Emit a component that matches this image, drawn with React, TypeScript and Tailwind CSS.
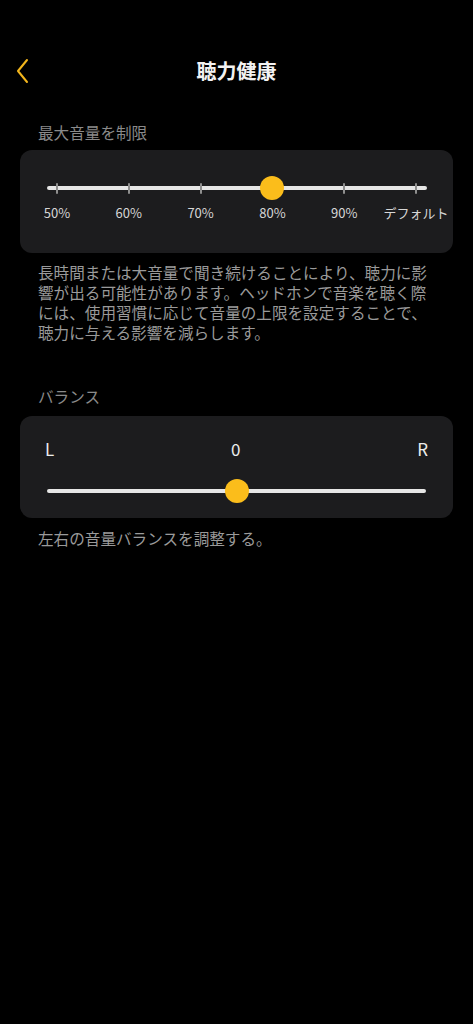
import React from "react";

const FONT = { fontFamily: '"Noto Sans CJK JP", "Noto Sans", Roboto, sans-serif' };

function Knob({ className }: { className: string }) {
  return <div className={`absolute top-1/2 -translate-y-1/2 -translate-x-1/2 w-[24px] h-[24px] rounded-full bg-[#fbbd1b] ${className}`} />;
}

export default function App() {
  const labels = ["50%", "60%", "70%", "80%", "90%", "デフォルト"];
  return (
    <div className="min-h-[1024px] w-full bg-black text-white" style={FONT}>
      {/* Header */}
      <div className="pt-[50px] grid grid-cols-[48px_1fr_48px] items-center h-[92px]">
        <div className="flex items-center pl-[15px]">
          <svg width="16" height="26" viewBox="0 0 16 26" fill="none">
            <path d="M12 2 L3 13 L12 24" stroke="#f2b51c" strokeWidth="2" strokeLinecap="round" strokeLinejoin="round" />
          </svg>
        </div>
        <div className="text-center text-[20px] font-bold leading-[28px] text-[#f2f2f2]">聴力健康</div>
        <div />
      </div>

      {/* Section 1 */}
      <div className="mt-[30px] px-[38px] text-[15.6px] leading-[20px] text-[#8a8a8a]">最大音量を制限</div>
      <div className="mt-[8px] mx-[20px] h-[103px] rounded-[12px] bg-[#1c1c1e] pt-[26px]">
        <div className="relative h-[24px]">
          <div className="absolute left-[27px] right-[26px] top-1/2 -translate-y-1/2 h-[4px] rounded-full bg-[#e6e6e6]" />
          <div className="absolute inset-0 px-[1px] grid grid-cols-6">
            {labels.map((l, i) => (
              <div key={l} className="relative flex items-center justify-center">
                {i !== 3 && <div className="w-[2px] h-[11px] bg-[#8f8f8f] rounded-[1px]" />}
                {i === 3 && <Knob className="left-1/2" />}
              </div>
            ))}
          </div>
        </div>
        <div className="mt-[3px] px-[1px] grid grid-cols-6">
          {labels.map((l) => (
            <div key={l} className="text-center text-[13px] leading-[20px] text-[#d6d6d6] whitespace-nowrap">{l}</div>
          ))}
        </div>
      </div>
      <div className="mt-[9px] px-[38px] text-[15.6px] leading-[20px] text-[#9a9a9a] whitespace-nowrap">
        長時間または大音量で聞き続けることにより、聴力に影<br />
        響が出る可能性があります。ヘッドホンで音楽を聴く際<br />
        には、使用習慣に応じて音量の上限を設定することで、<br />
        聴力に与える影響を減らします。
      </div>

      {/* Section 2 */}
      <div className="mt-[44px] px-[38px] text-[15.6px] leading-[20px] text-[#8a8a8a]">バランス</div>
      <div className="mt-[10px] mx-[20px] h-[102px] rounded-[12px] bg-[#1c1c1e] pt-[20px] px-[25px]">
        <div className="flex items-center justify-between h-[26px] text-[17px] leading-[26px] text-[#ececec]">
          <span>L</span>
          <span>0</span>
          <span>R</span>
        </div>
        <div className="relative mt-[17px] h-[24px] mx-[2px]">
          <div className="absolute left-0 right-0 top-1/2 -translate-y-1/2 h-[4px] rounded-full bg-[#e6e6e6]" />
          <Knob className="left-1/2" />
        </div>
      </div>
      <div className="mt-[10px] px-[38px] text-[15.6px] leading-[20px] text-[#9a9a9a]">左右の音量バランスを調整する。</div>
    </div>
  );
}
